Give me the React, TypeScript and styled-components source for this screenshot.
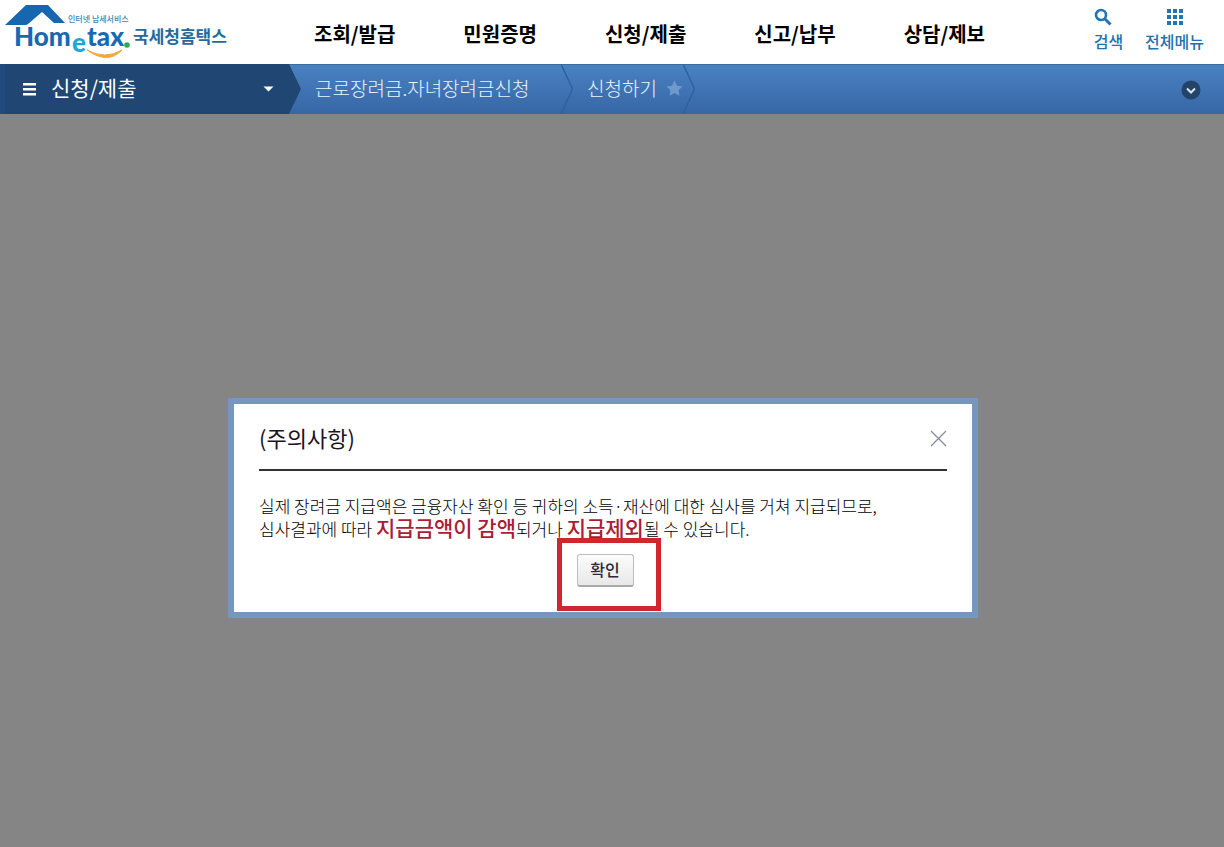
import React from 'react';
import styled, { createGlobalStyle } from 'styled-components';

const GlobalStyle = createGlobalStyle`
  *, *::before, *::after { box-sizing: border-box; }
  body {
    margin: 0;
    background: #858585;
    color: #000;
    font-family: "Noto Sans CJK KR", "Noto Sans", sans-serif;
  }
  a { color: inherit; text-decoration: none; }
  button { font-family: inherit; cursor: pointer; }
`;

const Page = styled.div`
  display: flex;
  flex-direction: column;
  min-height: 100vh;
`;

const Header = styled.header`
  display: flex;
  align-items: center;
  height: 64px;
  padding-right: 20px;
  background: #fff;
`;

const LogoLink = styled.a`
  flex: none;
  width: 314px;
  height: 64px;
`;

const MainNav = styled.nav`
  display: flex;
  flex: 1;
  gap: 68px;
  padding-top: 4px;
`;

const NavLink = styled.a`
  font-size: 20px;
  font-weight: 700;
  line-height: 28px;
  white-space: nowrap;
`;

const Tools = styled.div`
  display: flex;
  gap: 22px;
  padding-bottom: 4px;
`;

const ToolButton = styled.button`
  display: flex;
  flex-direction: column;
  align-items: center;
  gap: 3px;
  padding: 0;
  border: 0;
  background: none;
  color: #2173ae;
  font-size: 16px;
  font-weight: 500;
  line-height: 24px;
  white-space: nowrap;
`;

const LocationBar = styled.nav`
  display: flex;
  align-items: stretch;
  height: 50px;
  background: linear-gradient(#4a82c2, #3766a6);
  box-shadow: inset 0 1px 0 #3f6c9f;
`;

const SectionButton = styled.button`
  display: flex;
  align-items: center;
  width: 289px;
  padding: 0 15px 0 18px;
  border: 0;
  border-left: 5px solid #214b7c;
  background: #204674;
  color: #fff;
  font-size: 21px;
  line-height: 30px;
`;

const SectionName = styled.span`
  flex: 1;
  padding: 0 0 4px 15px;
  text-align: left;
`;

const Crumb = styled.a`
  display: flex;
  align-items: center;
  gap: 9px;
  padding: 0 0 2px 14px;
  color: #e9f6ff;
  font-size: 19px;
  font-weight: 300;
  line-height: 28px;
  white-space: nowrap;
`;

const LongCrumb = styled(Crumb)`
  min-width: 260px;
`;

const CrumbArrow = styled.svg`
  flex: none;
  display: block;
  width: 12px;
  height: 50px;
`;

const ExpandButton = styled.button`
  display: flex;
  align-items: center;
  margin-left: auto;
  padding: 2px 23px 0 0;
  border: 0;
  background: none;
`;

const Backdrop = styled.main`
  display: flex;
  justify-content: center;
  align-items: flex-start;
  flex: 1;
  padding: 284px 18px 40px 0;
  background: #858585;
`;

const Dialog = styled.section`
  width: 100%;
  max-width: 750px;
  padding: 0 25px 25px;
  border: 6px solid #7596bf;
  background: #fff;
`;

const DialogHead = styled.div`
  display: flex;
  align-items: center;
  justify-content: space-between;
  height: 67px;
  padding-top: 4px;
  border-bottom: 2px solid #333136;
`;

const DialogTitle = styled.h1`
  margin: 0;
  padding-bottom: 3px;
  color: #1c1024;
  font-size: 22px;
  font-weight: 400;
  line-height: 32px;
`;

const CloseButton = styled.button`
  display: flex;
  padding: 0;
  border: 0;
  background: none;
`;

const Notice = styled.p`
  margin: 23px 0 14px;
  font-size: 17px;
  font-weight: 300;
  line-height: 23px;
`;

const Warning = styled.strong`
  color: #a91d37;
  font-size: 21px;
  font-weight: 500;
  line-height: 20px;
`;

const Actions = styled.div`
  display: flex;
  justify-content: center;
  padding-left: 4px;
`;

const Highlighted = styled.div`
  position: relative;

  &::after {
    content: "";
    position: absolute;
    inset: -16px -27px -24px -20px;
    border: 5px solid #d0262f;
    pointer-events: none;
  }
`;

const ConfirmButton = styled.button`
  display: block;
  width: 57px;
  height: 33px;
  padding: 0 0 3px;
  border: 1px solid #bcbcbc;
  border-bottom: 2px solid #a9a9a9;
  border-radius: 3px;
  background: linear-gradient(#fcfcfc, #e8e8e8);
  color: #2e2735;
  font-size: 16px;
  font-weight: 500;
  line-height: 24px;
`;

const menus = ['조회/발급', '민원증명', '신청/제출', '신고/납부', '상담/제보'];

const Logo = () => (
  <svg width="240" height="64" viewBox="0 0 240 64" role="img" aria-label="Hometax 국세청홈택스">
    <path d="M5 25L26 5H48L65 23H54L42 12L28 24Q27 25 25 25Z" fill="#1667b0" />
    <path d="M87 50Q105 60 122 50Q108 65 87 50Z" fill="#f0a83a" stroke="#f0a83a" />
    <g fontFamily="Lato, sans-serif" fontWeight="900" fontSize="26">
      <text x="14" y="46" fill="#1769b3">Hom</text>
      <text x="72" y="52" fill="#1fa7dc">e</text>
      <text x="87" y="46" fill="#1769b3">tax</text>
    </g>
    <circle cx="127" cy="45" r="2.800" fill="#33a853" />
    <g fontFamily="Noto Sans CJK KR, sans-serif">
      <text x="68" y="22" fontSize="8" fontWeight="500" fill="#4483ae">인터넷 납세서비스</text>
      <text x="133" y="43" fontSize="17" fontWeight="700" fill="#26699f">국세청홈택스</text>
    </g>
  </svg>
);

const SearchIcon = () => (
  <svg width="28" height="18" viewBox="0 0 28 18" fill="none" stroke="#2275b2" aria-hidden="true">
    <circle cx="7" cy="7" r="5" strokeWidth="2.600" />
    <path d="M10.800 10.800L16.500 16.500" strokeWidth="3" />
  </svg>
);

const GridIcon = () => (
  <svg width="18" height="18" viewBox="0 0 18 18" fill="#2275b2" aria-hidden="true">
    {[1, 7, 13].map((y) => [1, 7, 13].map((x) => <rect key={`${x}-${y}`} x={x} y={y} width="4" height="4" />))}
  </svg>
);

const Separator = () => (
  <CrumbArrow viewBox="0 0 12 50" fill="none" aria-hidden="true">
    <path d="M0 0L11.500 25L0 50" stroke="#2d62a1" strokeWidth="1.500" />
  </CrumbArrow>
);

export default function App() {
  return (
    <Page>
      <GlobalStyle />
      <Header>
        <LogoLink href="#"><Logo /></LogoLink>
        <MainNav>
          {menus.map((menu) => <NavLink href="#" key={menu}>{menu}</NavLink>)}
        </MainNav>
        <Tools>
          <ToolButton type="button"><SearchIcon />검색</ToolButton>
          <ToolButton type="button"><GridIcon />전체메뉴</ToolButton>
        </Tools>
      </Header>

      <LocationBar>
        <SectionButton type="button">
          <svg width="13" height="14" viewBox="0 0 13 14" fill="#fff" aria-hidden="true">
            <path d="M0 1h13v2.500H0zM0 6h13v2.500H0zM0 11h13v2.500H0z" />
          </svg>
          <SectionName>신청/제출</SectionName>
          <svg width="11" height="6" viewBox="0 0 11 6" aria-hidden="true">
            <path d="M0.500 0.500H10.500L5.500 5.500Z" fill="#fff" />
          </svg>
        </SectionButton>
        <CrumbArrow viewBox="0 0 12 50" aria-hidden="true">
          <path d="M0 0L12 25L0 50Z" fill="#204674" />
        </CrumbArrow>
        <LongCrumb href="#">근로장려금.자녀장려금신청</LongCrumb>
        <Separator />
        <Crumb href="#">
          신청하기
          <svg width="17" height="17" viewBox="0 0 17 17" aria-hidden="true">
            <path d="M8.500 0.500L11 5.700L16.500 6.400L12.500 10.200L13.500 15.800L8.500 13.100L3.500 15.800L4.500 10.200L0.500 6.400L6 5.700Z" fill="#7299cc" />
          </svg>
        </Crumb>
        <Separator />
        <ExpandButton type="button" aria-label="펼치기">
          <svg width="20" height="20" viewBox="0 0 20 20" fill="none" aria-hidden="true">
            <circle cx="10" cy="10" r="9.500" fill="#234469" />
            <path d="M6 8.500L10 12.500L14 8.500" stroke="#dce6f0" strokeWidth="2" />
          </svg>
        </ExpandButton>
      </LocationBar>

      <Backdrop>
        <Dialog role="dialog" aria-labelledby="notice-title">
          <DialogHead>
            <DialogTitle id="notice-title">(주의사항)</DialogTitle>
            <CloseButton type="button" aria-label="닫기">
              <svg width="17" height="17" viewBox="0 0 17 17" stroke="#858aa3" strokeWidth="1.300" aria-hidden="true">
                <path d="M1 1L16 16M16 1L1 16" />
              </svg>
            </CloseButton>
          </DialogHead>
          <Notice>
            실제 장려금 지급액은 금융자산 확인 등 귀하의 소득·재산에 대한 심사를 거쳐 지급되므로,
            <br />
            심사결과에 따라 <Warning>지급금액이 감액</Warning>되거나 <Warning>지급제외</Warning>될 수 있습니다.
          </Notice>
          <Actions>
            <Highlighted>
              <ConfirmButton type="button">확인</ConfirmButton>
            </Highlighted>
          </Actions>
        </Dialog>
      </Backdrop>
    </Page>
  );
}
